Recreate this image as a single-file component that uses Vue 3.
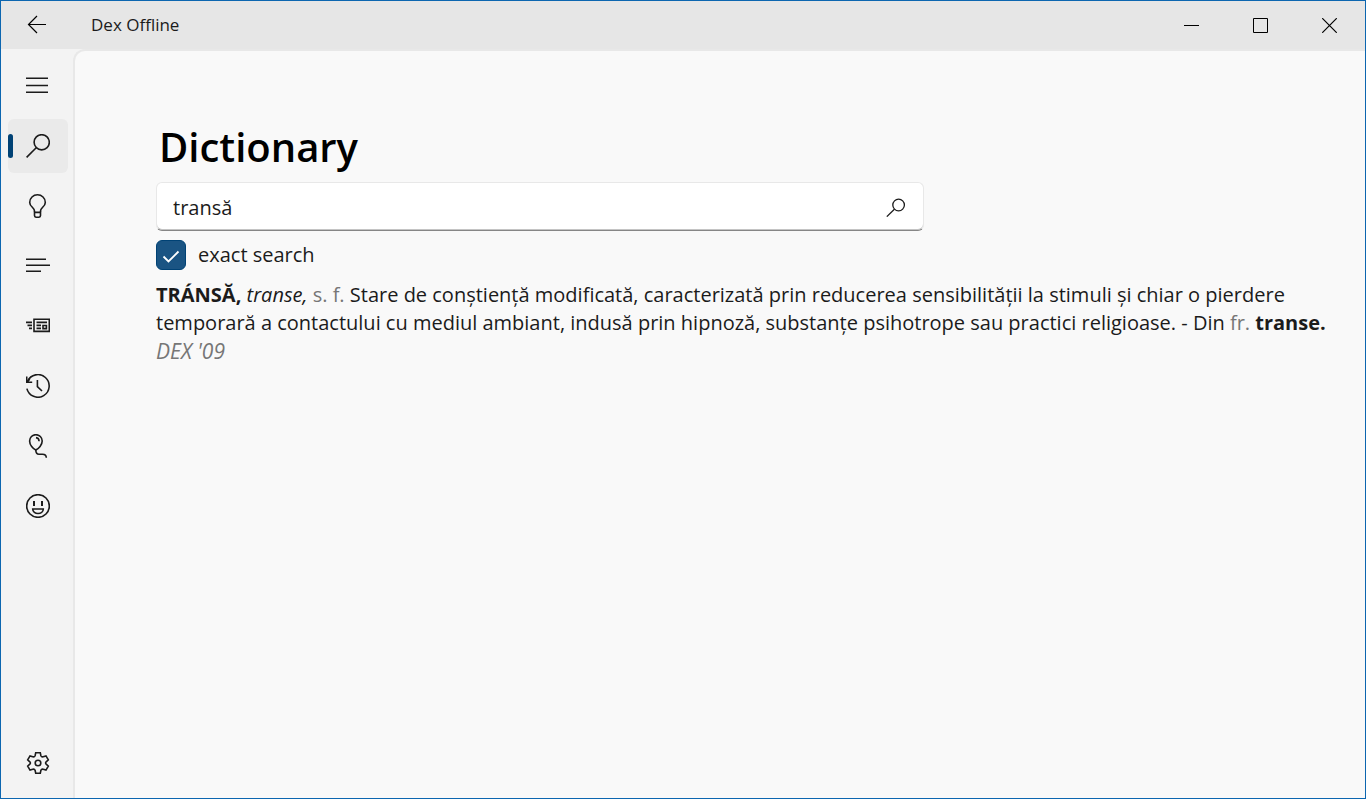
<script setup>
import { ref } from 'vue'

const query = ref('transă')
const exact = ref(true)
const active = ref('search')

const navItems = [
  { id: 'search', label: 'Dictionary' },
  { id: 'tips', label: 'Word of the day' },
  { id: 'list', label: 'Word list' },
  { id: 'news', label: 'Articles' },
  { id: 'history', label: 'History' },
  { id: 'games', label: 'Games' },
  { id: 'about', label: 'Feedback' },
]
</script>

<template>
  <div class="window">
    <header class="titlebar">
      <button class="back" type="button" aria-label="Back">
        <svg width="20" height="20" viewBox="0 0 20 20"><path d="M19 9.5H1.5M10 1L1.5 9.5L10 18" /></svg>
      </button>
      <span class="app-name">Dex Offline</span>
      <div class="captions">
        <button type="button" aria-label="Minimize">
          <svg class="crisp" width="15" height="15" viewBox="0 0 15 15"><path d="M0 7.5H15" /></svg>
        </button>
        <button type="button" aria-label="Maximize">
          <svg class="crisp" width="15" height="15" viewBox="0 0 15 15"><path d="M.5 .5H14.5V14.5H.5Z" /></svg>
        </button>
        <button type="button" aria-label="Close">
          <svg width="15" height="15" viewBox="0 0 15 15"><path d="M.2 .2L14.8 14.8M14.8 .2L.2 14.8" /></svg>
        </button>
      </div>
    </header>

    <div class="body">
      <nav class="sidebar">
        <button class="nav-item" type="button" aria-label="Menu">
          <svg width="24" height="24" viewBox="0 0 24 24"><path d="M0 4.2H22M0 11.5H22M0 18.2H22" /></svg>
        </button>
        <button
          v-for="item in navItems"
          :key="item.id"
          class="nav-item"
          :class="{ active: active === item.id }"
          type="button"
          :aria-label="item.label"
          @click="active = item.id"
        >
          <svg width="24" height="24" viewBox="0 0 24 24">
            <template v-if="item.id === 'search'">
              <circle cx="15.7" cy="8.3" r="7.6" /><path d="M10.2 13.8L.6 23.4" />
            </template>
            <template v-else-if="item.id === 'tips'">
              <path d="M8.5 18V17C8.5 13.6 3.7 12.8 3.7 8.4A7.8 7.6 0 0 1 19.3 8.4C19.3 12.8 14.5 13.6 14.5 17V18" />
              <path d="M8.5 18.4H14.5V21.6Q14.5 23.2 13 23.2H10Q8.5 23.2 8.5 21.6Z" />
            </template>
            <template v-else-if="item.id === 'list'">
              <path d="M0 5.2H20M0 11.2H24M0 17.2H15" />
            </template>
            <template v-else-if="item.id === 'news'">
              <path d="M8 5.2H23.3V17.4H8Z" />
              <path d="M0 8.4H6M1.5 11.4H6M3 14.4H6M10.5 8.4H21M10.5 11.4H15M10.5 14.4H15M17 11.5H20.4V14.6H17Z" />
            </template>
            <template v-else-if="item.id === 'history'">
              <path d="M1.6 7.2A11.3 11.3 0 1 1 .9 14.6" />
              <path d="M.7 2.6V8.3H6.2M1 8L3.8 5.2M11.4 6V12.6L16 17" />
            </template>
            <template v-else-if="item.id === 'games'">
              <path d="M9.8 16C7 14.6 3.6 11 3.6 7A6.3 6.3 0 0 1 16.2 7C16.2 11 12.7 14.6 9.8 16Z" />
              <path d="M10 3.6Q13 4 13.1 7.2M9.8 16C9.8 19 10.5 20.2 13 20.2H16.5Q20.3 20.2 20.3 23.8" />
            </template>
            <template v-else>
              <circle cx="12" cy="12" r="11.3" /><path d="M6.7 15H17.3C17.3 21 6.7 21 6.7 15Z" />
              <path class="thick" d="M8 7V12M16 7V12" />
            </template>
          </svg>
        </button>
        <button class="nav-item settings" type="button" aria-label="Settings">
          <svg width="24" height="24" viewBox="0 0 24 24">
            <circle cx="12" cy="12" r="2.8" />
            <path d="M9.7 1.8H14.3L14.9 4.7Q15.5 6.2 17.2 5.8L20 4.9L22.3 8.9L20.2 10.8Q19 12 20.2 13.2L22.3 15.1L20 19.1L17.2 18.2Q15.5 17.8 14.9 19.3L14.3 22.2H9.7L9.1 19.3Q8.5 17.8 6.8 18.2L4 19.1L1.7 15.1L3.8 13.2Q5 12 3.8 10.8L1.7 8.9L4 4.9L6.8 5.8Q8.5 6.2 9.1 4.7Z" />
          </svg>
        </button>
      </nav>

      <main class="content">
        <h1>Dictionary</h1>
        <form class="search" @submit.prevent>
          <input v-model="query" type="text" aria-label="Search word" spellcheck="false" />
          <button type="submit" aria-label="Search">
            <svg width="20" height="20" viewBox="0 0 20 20"><circle cx="12.6" cy="8" r="5.8" /><path d="M8.4 12.2L.8 19.6" /></svg>
          </button>
        </form>
        <label class="exact">
          <span class="tick">
            <input v-model="exact" type="checkbox" />
            <svg v-if="exact" width="30" height="30" viewBox="0 0 30 30"><path d="M7.5 16.5L12.5 21.5L22.5 11.5" /></svg>
          </span>
          exact search
        </label>
        <article class="definition">
          <b>TRÁNSĂ,</b> <i>transe,</i> <span class="abbr">s. f.</span> Stare de conștiență modificată, caracterizată prin
          reducerea sensibilității la stimuli și chiar o pierdere temporară a contactului cu mediul ambiant, indusă prin
          hipnoză, substanțe psihotrope sau practici religioase. - Din <span class="abbr">fr.</span> <b>transe.</b>
          <cite>DEX '09</cite>
        </article>
      </main>
    </div>
  </div>
</template>

<style>
body {
  margin: 0;
}
</style>

<style scoped>
.window {
  box-sizing: border-box;
  display: flex;
  flex-direction: column;
  min-height: 100vh;
  border: 1px solid #0c66b0;
  background: #f3f3f3;
  color: #1b1b1b;
  font-family: "Open Sans", "Noto Sans", sans-serif;
  font-size: 20px;
}

button {
  display: flex;
  align-items: center;
  justify-content: center;
  padding: 0;
  border: 0;
  background: none;
  color: inherit;
}

svg {
  display: block;
  fill: none;
  stroke: #1b1b1b;
  stroke-width: 1.6;
}

.titlebar {
  display: flex;
  align-items: center;
  height: 48px;
  background: #e6e6e6;
}

.titlebar svg {
  stroke: #000;
  stroke-width: 1.2;
}

.titlebar .crisp {
  stroke-width: 1;
}

.back {
  width: 72px;
  height: 48px;
}

.app-name {
  flex: 1;
  padding-left: 18px;
  font-size: 17px;
  line-height: 48px;
}

.captions {
  display: flex;
  padding-right: 1px;
}

.captions button {
  width: 69px;
  height: 48px;
}

.body {
  display: flex;
  flex: 1;
  background: linear-gradient(#e6e6e6, #e6e6e6) right top / calc(100% - 84px) 1px no-repeat;
}

.sidebar {
  display: flex;
  flex-direction: column;
  gap: 6px;
  box-sizing: border-box;
  width: 72px;
  padding: 10px 5px 8px 7px;
}

.nav-item {
  position: relative;
  height: 54px;
  border-radius: 6px;
}

.nav-item.active {
  background: #eaeaea;
}

.nav-item.active::before {
  content: "";
  position: absolute;
  left: 0;
  top: 15px;
  width: 5px;
  height: 24px;
  border-radius: 3px;
  background: #004275;
}

.thick {
  stroke-width: 2;
}

.settings {
  margin-top: auto;
}

.content {
  flex: 1;
  box-sizing: border-box;
  min-width: 0;
  padding: 64px 36px 40px 81px;
  border-left: 2px solid #e8e8e8;
  border-top: 2px solid #e8e8e8;
  border-top-left-radius: 12px;
  background: #f9f9f9;
}

h1 {
  margin: 0 0 3px;
  padding-left: 3px;
  color: #000;
  font-size: 40px;
  font-weight: 600;
  line-height: 64px;
}

.search {
  display: flex;
  box-sizing: border-box;
  max-width: 768px;
  height: 49px;
  border: 1px solid #e8e8e8;
  border-bottom-color: #868686;
  border-radius: 6px;
  background: #fff;
  box-shadow: inset 0 -1px #c4c4c4;
}

.search input {
  flex: 1;
  min-width: 0;
  padding: 2px 16px 0;
  border: 0;
  outline: 0;
  background: none;
  color: inherit;
  font: inherit;
}

.search button {
  width: 54px;
}

.search svg {
  stroke-width: 1.3;
}

.exact {
  display: flex;
  align-items: center;
  gap: 12px;
  width: max-content;
  margin: 9px 0 11px;
  line-height: 30px;
}

.tick {
  position: relative;
  width: 30px;
  height: 30px;
}

.tick input {
  appearance: none;
  box-sizing: border-box;
  display: block;
  width: 30px;
  height: 30px;
  margin: 0;
  border: 1px solid #868686;
  border-radius: 6px;
}

.tick input:checked {
  border-color: #004275;
  background: #1a5483;
}

.tick svg {
  position: absolute;
  inset: 0;
  stroke: #fff;
  stroke-width: 1.8;
  pointer-events: none;
}

.definition {
  line-height: 28px;
}

.abbr,
cite {
  color: #767676;
}

cite {
  display: block;
  font-size: 21px;
}
</style>
